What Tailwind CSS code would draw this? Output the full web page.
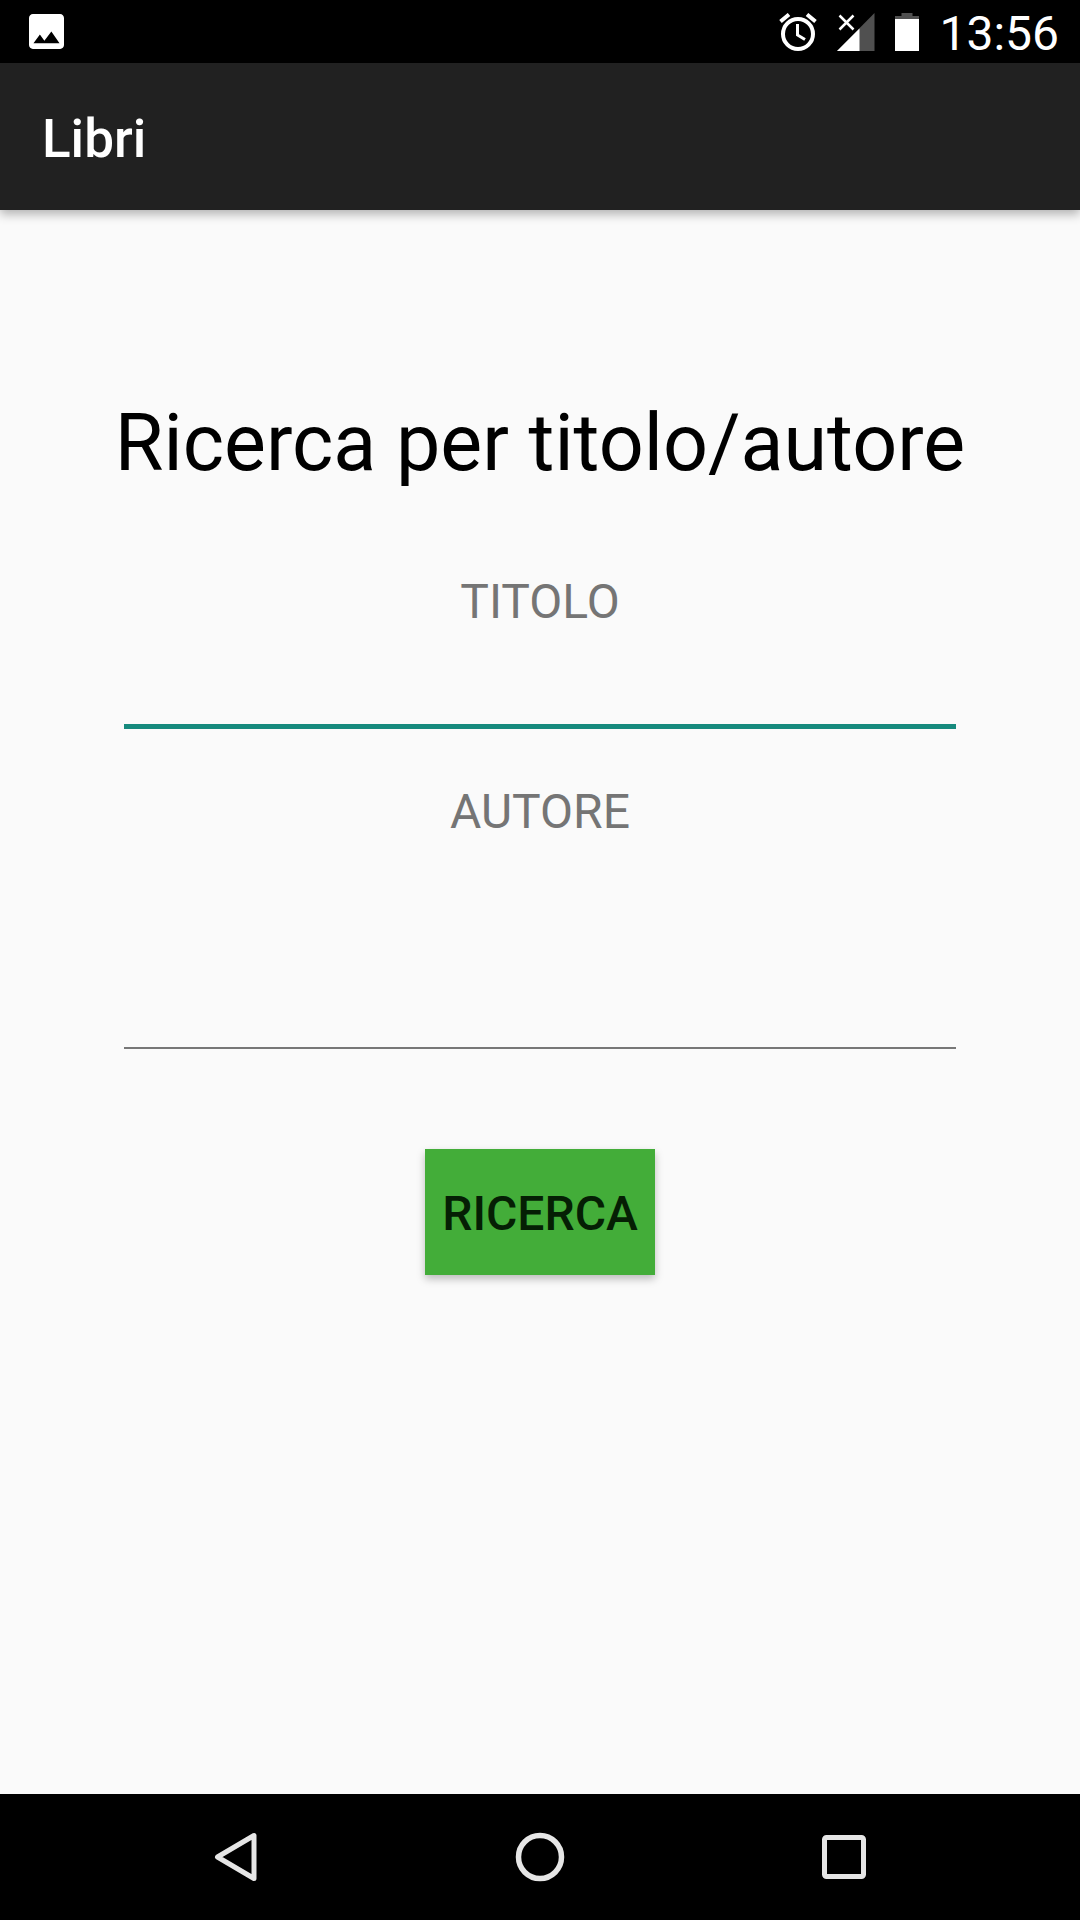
<!DOCTYPE html>
<html lang="it">
<head>
  <meta charset="utf-8"/>
  <meta name="viewport" content="width=device-width, initial-scale=1.0"/>
  <title>Libri</title>
  <script src="https://cdn.jsdelivr.net/npm/@tailwindcss/browser@4"></script>
</head>
<body class="min-h-screen flex flex-col bg-[#fafafa] font-[Roboto,sans-serif]">

  <!-- Status bar -->
  <div class="h-[63px] shrink-0 bg-black text-white flex items-center justify-between pl-[29px] pr-[21px]">
    <svg class="w-[35px] h-[35px]" viewBox="3 3 18 18" fill="currentColor" aria-hidden="true">
      <path d="M21 19V5c0-1.100-.9-2-2-2H5c-1.100 0-2 .9-2 2v14c0 1.100.9 2 2 2h14c1.100 0 2-.9 2-2zM5.300 18l3.300-4.400 2.300 3.100 3.600-4.700 4.200 6z"/>
    </svg>
    <div class="flex items-center gap-5">
      <svg class="w-[38px] h-[38px]" viewBox="0 0 38 38" fill="none" stroke="currentColor" aria-hidden="true">
        <circle cx="19" cy="21" r="15" stroke-width="4"/>
        <path d="M1.500 8.500 10 1.500M36.500 8.500 28 1.500" stroke-width="4"/>
        <path d="M18.500 11v11l7.500 4.500" stroke-width="3"/>
      </svg>
      <svg class="w-[38px] h-[38px]" viewBox="0 0 38 38" aria-hidden="true">
        <path d="M37.500 0v38H0z" fill="#505050"/>
        <path d="M22.500 15.500V38H0z" fill="#fff"/>
        <path d="M2.500 2.500l14 14M16.500 2.500l-14 14" fill="none" stroke="#fff" stroke-width="2.500"/>
      </svg>
      <svg class="w-6 h-[38px]" viewBox="0 0 24 38" aria-hidden="true">
        <path d="M6.500 0h11v3H24v3H0V3h6.500z" fill="#505050"/>
        <path d="M0 6h24v32H0z" fill="#fff"/>
      </svg>
      <span class="text-[48px] leading-none pt-[5px]">13:56</span>
    </div>
  </div>

  <!-- App bar -->
  <header class="h-[147px] shrink-0 bg-[#212121] flex items-center px-[42px] pt-1.5 shadow-[0_4px_10px_rgba(0,0,0,0.3)]">
    <h1 class="text-white text-[53px] leading-none font-medium">Libri</h1>
  </header>

  <!-- Search form -->
  <main class="grow pt-[185px] pb-24">
    <h2 class="text-center text-black text-[79px] leading-[96px]">Ricerca per titolo/autore</h2>
    <form class="mt-[83px] px-[124px] flex flex-col items-center">
      <label for="titolo" class="text-[48px] leading-[56px] text-[#757575]">TITOLO</label>
      <input type="text" id="titolo" class="w-full h-[99px] border-b-5 border-[#168a7d] text-[48px] text-black outline-none">
      <label for="autore" class="mt-[55px] text-[48px] leading-[56px] text-[#757575]">AUTORE</label>
      <input type="text" id="autore" class="w-full h-[209px] border-b-2 border-[#777777] text-[48px] text-black outline-none">
      <button type="submit" class="mt-[100px] h-[126px] px-[17px] pt-1 bg-[#43ad39] text-[#051f04] text-[48px] font-medium shadow-[0_4px_8px_rgba(0,0,0,0.25)]">RICERCA</button>
    </form>
  </main>

  <!-- Navigation bar -->
  <nav class="h-[126px] shrink-0 bg-black text-[#e6e6e6] flex items-center justify-center gap-[183px]">
    <button type="button" aria-label="Indietro" class="w-[120px] h-full flex items-center justify-center">
      <svg class="w-[50px] h-[50px]" viewBox="0 0 50 50" fill="none" stroke="currentColor" stroke-width="5" stroke-linejoin="round">
        <path d="M42 3.500v43L5.500 25z"/>
      </svg>
    </button>
    <button type="button" aria-label="Home" class="w-[120px] h-full flex items-center justify-center">
      <svg class="w-[50px] h-[50px]" viewBox="0 0 50 50" fill="none" stroke="currentColor" stroke-width="5.500">
        <circle cx="25" cy="25" r="21.500"/>
      </svg>
    </button>
    <button type="button" aria-label="Recenti" class="w-[120px] h-full flex items-center justify-center">
      <svg class="w-[50px] h-[50px]" viewBox="0 0 50 50" fill="none" stroke="currentColor" stroke-width="5">
        <rect x="6.500" y="5.500" width="39" height="39" rx="2"/>
      </svg>
    </button>
  </nav>

</body>
</html>
